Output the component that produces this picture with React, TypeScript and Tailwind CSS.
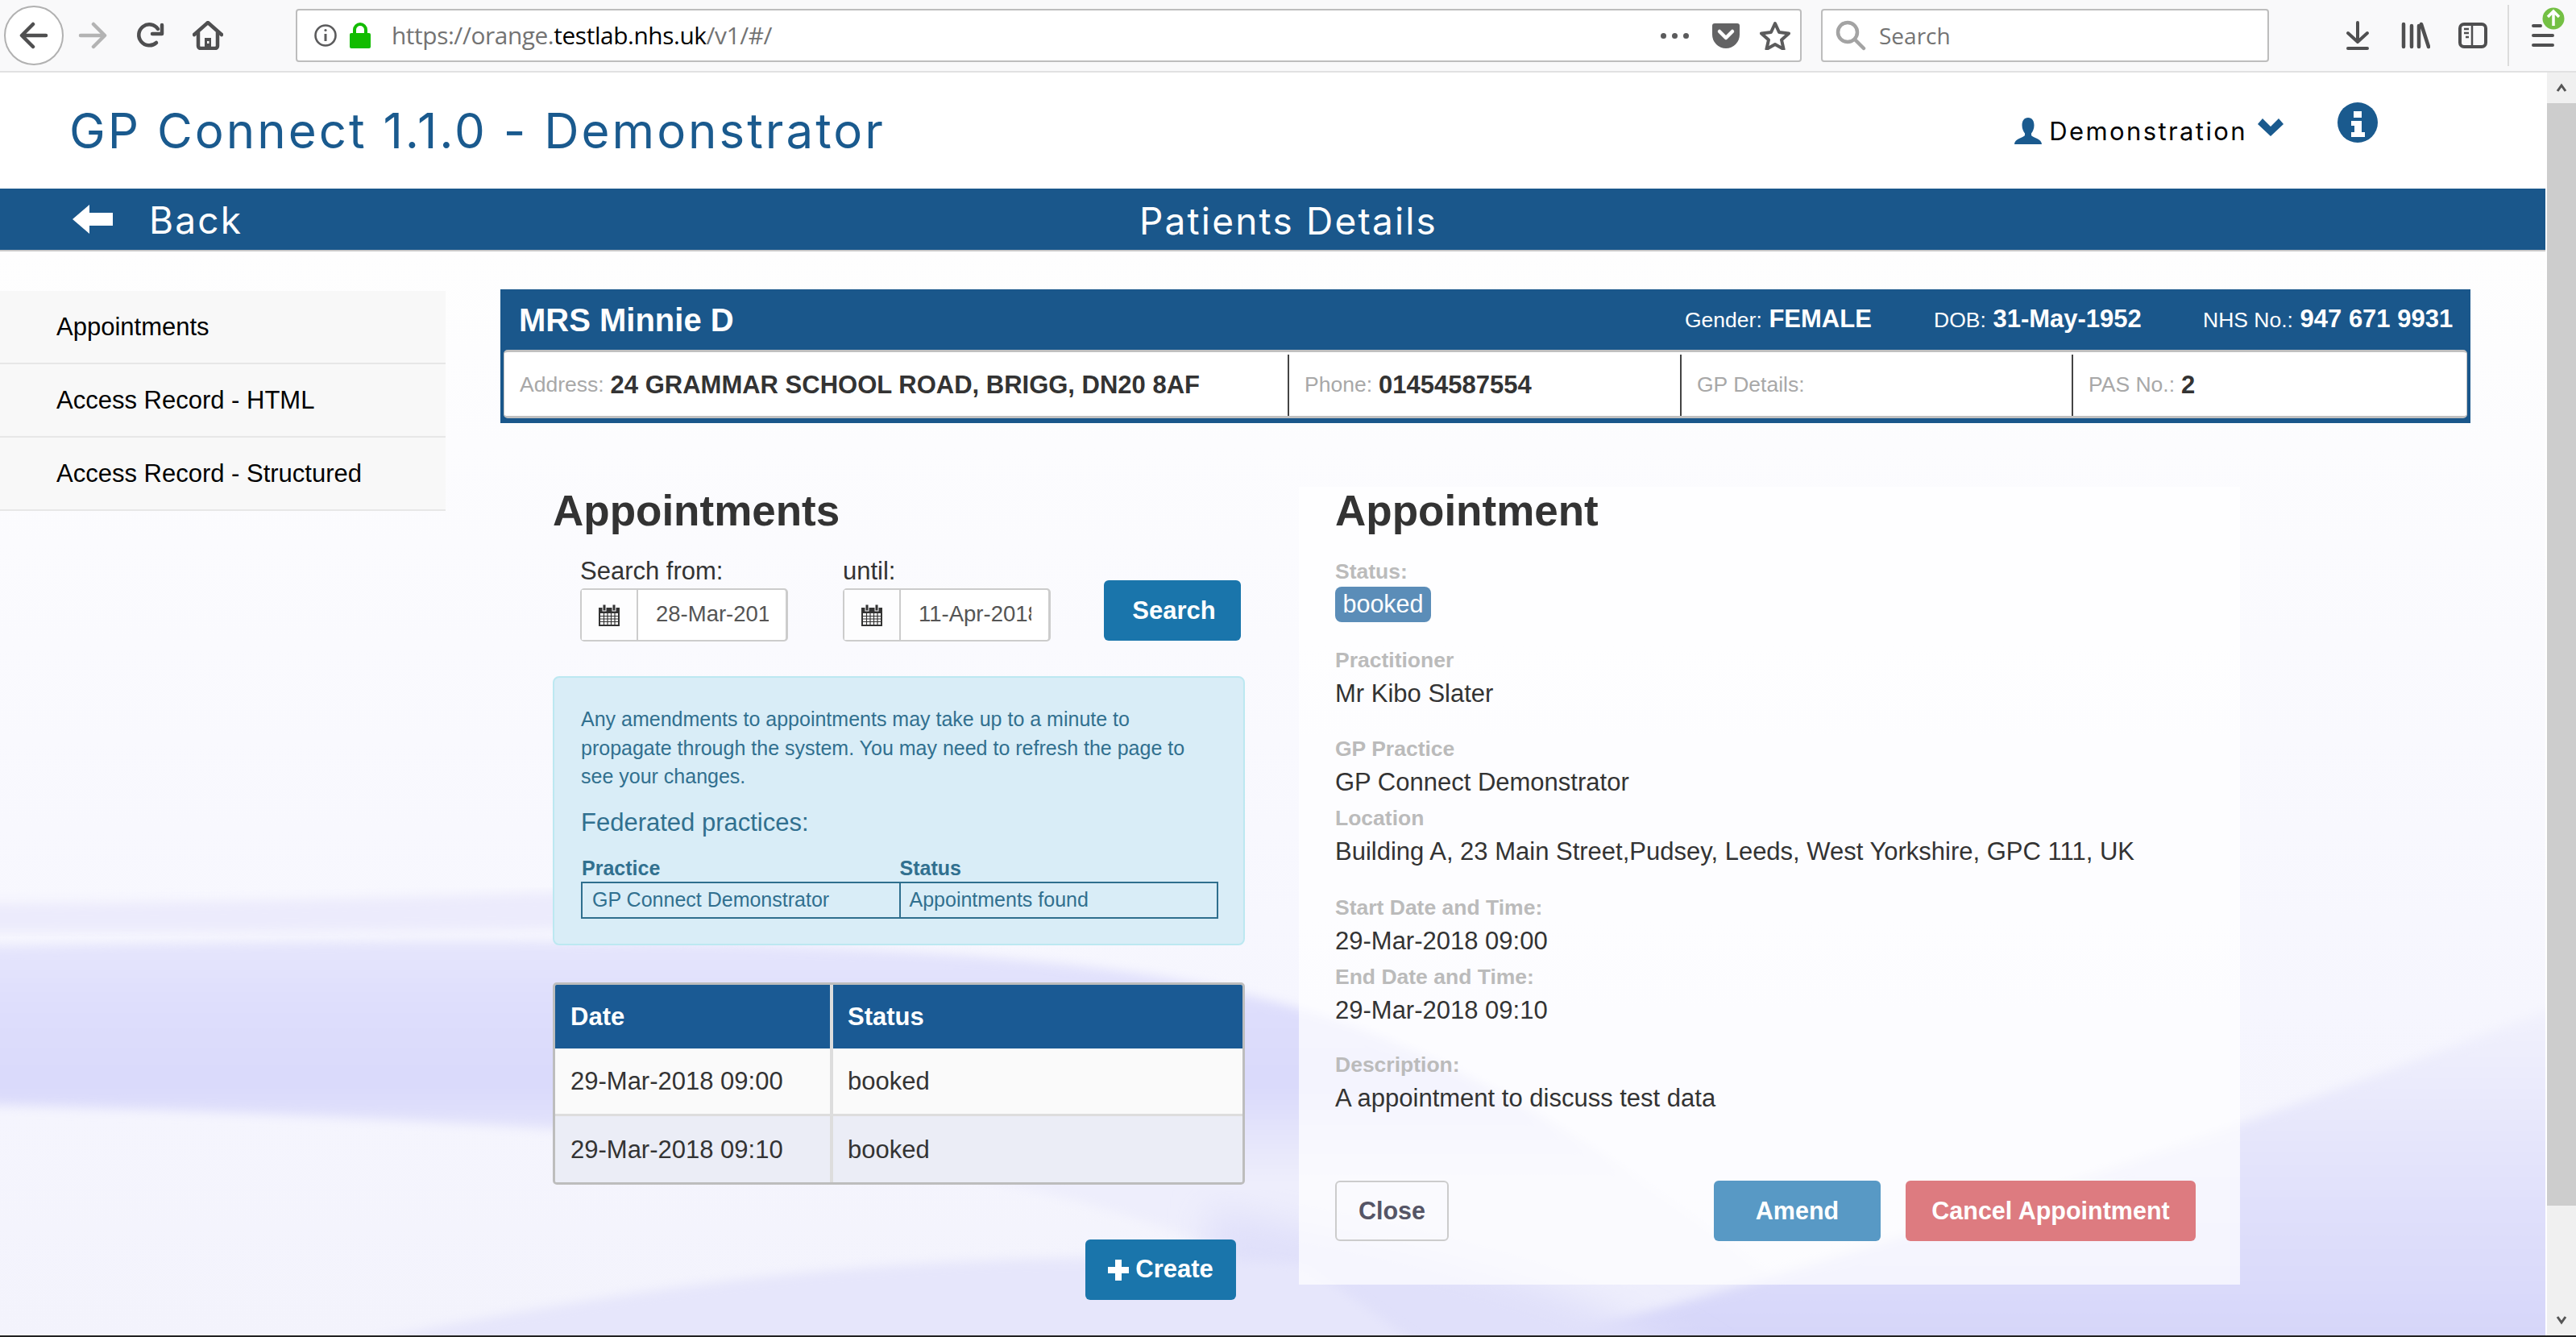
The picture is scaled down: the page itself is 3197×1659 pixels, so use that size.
import React from "react";

const sans = "font-['Liberation_Sans',Arial,sans-serif]";

// Firefox toolbar glyphs
const BackIcon = () => (
  <svg width="36" height="34" viewBox="0 0 36 34" fill="none" stroke="#4f4f50" strokeWidth="4.5" strokeLinecap="round" strokeLinejoin="round">
    <path d="M33 17H4M17 3 3 17l14 14" />
  </svg>
);
const ForwardIcon = () => (
  <svg width="36" height="34" viewBox="0 0 36 34" fill="none" stroke="#b3b3b3" strokeWidth="4.5" strokeLinecap="round" strokeLinejoin="round">
    <path d="M3 17h29M19 3l14 14-14 14" />
  </svg>
);
const ReloadIcon = () => (
  <svg width="36" height="34" viewBox="0 0 36 34" fill="none" stroke="#4f4f50" strokeWidth="4.5" strokeLinecap="round" strokeLinejoin="round">
    <path d="M26 26a13 13 0 1 1 2-17" />
    <path d="M33 4v11H21" fill="none" />
  </svg>
);
const HomeIcon = () => (
  <svg width="38" height="36" viewBox="0 0 38 36" fill="none" stroke="#4f4f50" strokeWidth="4.5" strokeLinecap="round" strokeLinejoin="round">
    <path d="M2 17 19 2l17 15" />
    <path d="M7 14v17a3 3 0 0 0 3 3h18a3 3 0 0 0 3-3V14" />
    <path d="M15 34V21h8v13" fill="#4f4f50" stroke="none" />
    <rect x="18" y="25" width="2.5" height="3" fill="#f9f9fa" stroke="none" />
  </svg>
);
const InfoRing = () => (
  <svg width="30" height="30" viewBox="0 0 30 30" fill="none" stroke="#5b5b5c" strokeWidth="2.6">
    <circle cx="15" cy="15" r="12.5" />
    <path d="M15 13v9" strokeWidth="3" />
    <circle cx="15" cy="8.5" r="1.6" fill="#5b5b5c" stroke="none" />
  </svg>
);
const LockIcon = () => (
  <svg width="28" height="32" viewBox="0 0 28 32">
    <path d="M7 14V9a7 7 0 0 1 14 0v5" fill="none" stroke="#12bc00" strokeWidth="4" />
    <rect x="1" y="13" width="26" height="19" rx="2" fill="#12bc00" />
  </svg>
);
const PocketIcon = () => (
  <svg width="36" height="32" viewBox="0 0 36 32">
    <path d="M4 1h28a3 3 0 0 1 3 3v11a17 17 0 0 1-34 0V4a3 3 0 0 1 3-3z" fill="#636364" />
    <path d="M10 11l8 8 8-8" fill="none" stroke="#fff" strokeWidth="4.5" strokeLinecap="round" strokeLinejoin="round" />
  </svg>
);
const StarIcon = () => (
  <svg width="38" height="36" viewBox="0 0 38 36" fill="none" stroke="#5b5b5c" strokeWidth="4" strokeLinejoin="round">
    <path d="M19 3l5 11 12 1.400-9 8 2.600 11.600L19 29l-10.600 6L11 23.400l-9-8L14 14z" />
  </svg>
);
const MagnifierIcon = () => (
  <svg width="38" height="38" viewBox="0 0 38 38" fill="none" stroke="#a3a3a3" strokeWidth="4.5" strokeLinecap="round">
    <circle cx="15" cy="15" r="12" />
    <path d="M24 24l11 11" />
  </svg>
);
const DownloadIcon = () => (
  <svg width="30" height="36" viewBox="0 0 30 36" fill="none" stroke="#4f4f50" strokeWidth="4" strokeLinecap="round" strokeLinejoin="round">
    <path d="M15 2v23M3 15l12 11 12-11M3 34h24" />
  </svg>
);
const LibraryIcon = () => (
  <svg width="36" height="34" viewBox="0 0 36 34" fill="none" stroke="#4f4f50" strokeWidth="4.5" strokeLinecap="round">
    <path d="M3 3v28M13 5v26M22 5v26M25 3l9 28" />
  </svg>
);
const SidebarIcon = () => (
  <svg width="36" height="32" viewBox="0 0 36 32" fill="none" stroke="#4f4f50" strokeWidth="4">
    <rect x="2" y="2" width="32" height="28" rx="5" />
    <path d="M17 2v28" strokeWidth="2.500" />
    <path d="M7 8h6M7 13h6M9 18h4" strokeWidth="2.500" />
  </svg>
);
const MenuIcon = () => (
  <div className="relative w-[28px] h-[30px]">
    <svg width="28" height="30" viewBox="0 0 28 30" fill="none" stroke="#4f4f50" strokeWidth="4" strokeLinecap="round">
      <path d="M2 3h9M2 15h24M2 27h24" />
    </svg>
    <svg className="absolute -top-[20px] left-[13px]" width="28" height="28" viewBox="0 0 28 28">
      <circle cx="14" cy="14" r="13.500" fill="#74c044" />
      <path d="M14 23V6M7 12l7-7 7 7" fill="none" stroke="#fff" strokeWidth="3.500" />
    </svg>
  </div>
);

// Glyphicon style page icons
const GlyphUser = () => (
  <svg width="34" height="33" viewBox="0 0 34 33" fill="#1a5a8e">
    <path d="M17 0c5 0 7.500 4 7.500 9.500 0 4-1.500 7.500-3.500 10v2.500c2 3 13 4 13 11H0c0-7 11-8 13-11v-2.500c-2-2.500-3.500-6-3.500-10C9.500 4 12 0 17 0z" />
  </svg>
);
const GlyphChevron = () => (
  <svg width="32" height="22" viewBox="0 0 32 22" fill="#1a5a8e">
    <path d="M0 7l6-7 10 10L26 0l6 7-16 15z" />
  </svg>
);
const GlyphInfo = () => (
  <svg width="50" height="50" viewBox="0 0 50 50">
    <circle cx="25" cy="25" r="25" fill="#1a5a8e" />
    <rect x="20" y="11" width="10" height="8" fill="#fff" />
    <path d="M17 23h13v14h4v6H17v-6h4v-8h-4z" fill="#fff" />
  </svg>
);
const GlyphArrowLeft = () => (
  <svg width="50" height="36" viewBox="0 0 50 36" fill="#fff">
    <path d="M0 18 21 0v10h29v16H21v10z" />
  </svg>
);
const GlyphCalendar = () => (
  <svg width="26" height="27" viewBox="0 0 26 27">
    <rect x="0" y="4" width="26" height="23" fill="#333" />
    <rect x="5" y="0" width="4" height="8" fill="#333" stroke="#fbfbfe" strokeWidth="1" />
    <rect x="17" y="0" width="4" height="8" fill="#333" stroke="#fbfbfe" strokeWidth="1" />
    <path d="M2 11h22v14H2z" fill="#fff" />
    <path d="M2 14.500h22M2 18h22M2 21.500h22M6.500 11v14M11 11v14M15.500 11v14M20 11v14" stroke="#333" strokeWidth="1.200" />
  </svg>
);
const GlyphPlus = () => (
  <svg width="26" height="26" viewBox="0 0 26 26" fill="#fff">
    <path d="M9 0h8v9h9v8h-9v9H9v-9H0V9h9z" />
  </svg>
);

// Wavy lavender backdrop of the page
const Backdrop = () => (
  <svg className="absolute inset-0 w-full h-full" viewBox="0 312 3159 1347" preserveAspectRatio="none">
    <defs>
      <linearGradient id="base" x1="0" y1="312" x2="0" y2="1659" gradientUnits="userSpaceOnUse">
        <stop offset="0" stopColor="#fefefe" />
        <stop offset="0.45" stopColor="#f9f9fe" />
        <stop offset="0.7" stopColor="#f6f6fe" />
        <stop offset="1" stopColor="#f3f3fc" />
      </linearGradient>
      <linearGradient id="band" x1="0" y1="1160" x2="0" y2="1470" gradientUnits="userSpaceOnUse">
        <stop offset="0" stopColor="#e6e6fc" />
        <stop offset="0.3" stopColor="#dedefc" />
        <stop offset="0.6" stopColor="#d9d9fb" />
        <stop offset="0.8" stopColor="#e4e4fb" />
        <stop offset="1" stopColor="#eeeefc" />
      </linearGradient>
      <linearGradient id="corner" x1="0" y1="1250" x2="0" y2="1659" gradientUnits="userSpaceOnUse">
        <stop offset="0" stopColor="#f2f2fd" />
        <stop offset="0.45" stopColor="#e4e4fb" />
        <stop offset="1" stopColor="#d6d6f9" />
      </linearGradient>
      <filter id="soft"><feGaussianBlur stdDeviation="7" /></filter>
      <filter id="softer"><feGaussianBlur stdDeviation="22" /></filter>
    </defs>
    <rect x="0" y="312" width="3159" height="1347" fill="url(#base)" />
    <path d="M-40 1122C200 1122 500 1116 700 1108L900 1150C600 1158 200 1158-40 1158z" fill="#ecebfc" filter="url(#soft)" />
    <path d="M-40 1175C400 1168 800 1165 1050 1178S1450 1205 1620 1255 2050 1440 2350 1720H1800C1600 1540 1250 1440 800 1410S200 1380-40 1372z" fill="url(#band)" filter="url(#soft)" />
    <path d="M1700 1720C2100 1620 2500 1510 3200 1240V1720z" fill="url(#corner)" filter="url(#soft)" />
    <path d="M1500 1500C1800 1560 2000 1600 2150 1720H1500z" fill="#e0e0fa" filter="url(#softer)" />
    <path d="M300 1700C700 1610 1100 1540 1620 1570L1800 1700z" fill="#e6e6fb" filter="url(#soft)" />
  </svg>
);

const Toolbar = () => (
  <div className={`flex items-center h-[90px] bg-[#f9f9fa] border-b-2 border-[#e1e1e2] ${sans}`}>
    <div className="ml-[5px] flex items-center justify-center w-[74px] h-[74px] rounded-full bg-white border-2 border-[#b1b1b1]">
      <BackIcon />
    </div>
    <div className="ml-[18px] flex items-center gap-[35px] w-[200px]">
      <ForwardIcon />
      <ReloadIcon />
      <HomeIcon />
    </div>
    <div className="ml-[70px] flex items-center w-[1869px] h-[66px] bg-white border-2 border-[#bdbdbd] rounded-[4px] pl-[20px] pr-[12px]">
      <InfoRing />
      <div className="ml-[14px]"><LockIcon /></div>
      <div className="ml-[25px] font-['Open_Sans',sans-serif] text-[29.8px] text-[#737373] flex-1 tracking-[-0.4px]">
        https://orange.<span className="text-black">testlab.nhs.uk</span>/v1/#/
      </div>
      <div className="flex gap-[7px] mr-[28px]">
        <span className="w-[7px] h-[7px] rounded-full bg-[#5b5b5c]" />
        <span className="w-[7px] h-[7px] rounded-full bg-[#5b5b5c]" />
        <span className="w-[7px] h-[7px] rounded-full bg-[#5b5b5c]" />
      </div>
      <PocketIcon />
      <div className="ml-[24px]"><StarIcon /></div>
    </div>
    <div className="ml-[24px] flex items-center w-[556px] h-[66px] bg-white border-2 border-[#bdbdbd] rounded-[4px] pl-[16px]">
      <MagnifierIcon />
      <span className="ml-[16px] font-['Open_Sans',sans-serif] text-[28px] text-[#737373]">Search</span>
    </div>
    <div className="ml-[95px]"><DownloadIcon /></div>
    <div className="ml-[39px]"><LibraryIcon /></div>
    <div className="ml-[35px]"><SidebarIcon /></div>
    <div className="ml-[25px] w-[2px] h-[76px] bg-[#dcdcdc]" />
    <div className="ml-[28px]"><MenuIcon /></div>
  </div>
);

const Header = () => (
  <div className="flex items-center justify-between h-[144px] bg-white pl-[86px] pr-[208px] font-['Inter',sans-serif]">
    <h1 className="text-[60px] text-[#1a5a8e] font-normal tracking-[3px]">GP Connect 1.1.0 - Demonstrator</h1>
    <div className="flex items-center">
      <GlyphUser />
      <span className="ml-[9px] text-[31px] text-black mt-[2px] tracking-[2.4px]">Demonstration</span>
      <span className="ml-[13px] -mt-[8px]"><GlyphChevron /></span>
      <span className="ml-[67px] -mt-[20px]"><GlyphInfo /></span>
    </div>
  </div>
);

const BackBar = () => (
  <div className="relative flex items-center h-[78px] bg-[#1a578b] border-b-2 border-[#c8c8c8] pl-[90px] font-['Inter',sans-serif] text-white text-[46px] tracking-[2.2px]">
    <GlyphArrowLeft />
    <span className="ml-[45px] mt-[2px]">Back</span>
    <span className="absolute left-[1414px] top-[6px]">Patients Details</span>
  </div>
);

const Sidebar = () => (
  <nav className={`w-[553px] mt-[49px] shrink-0 text-[31px] text-black ${sans}`}>
    {["Appointments", "Access Record - HTML", "Access Record - Structured"].map((item) => (
      <div key={item} className="flex items-center h-[91px] pl-[70px] pt-[2px] bg-[#f8f8f8] border-b-2 border-[#e7e7e7]">
        {item}
      </div>
    ))}
  </nav>
);

const PatientBanner = () => (
  <div className="w-[2445px] bg-[#1a578b] text-[31px] pb-[6px]">
    <div className="flex items-center h-[75px] pl-[23px] text-white">
      <span className="font-bold text-[40px] flex-1">MRS Minnie D</span>
      <span className="w-[309px]"><span className="text-[26.5px]">Gender:</span> <b>FEMALE</b></span>
      <span className="w-[334px]"><span className="text-[26.5px]">DOB:</span> <b>31-May-1952</b></span>
      <span className="w-[332px]"><span className="text-[26.5px]">NHS No.:</span> <b>947 671 9931</b></span>
    </div>
    <div className="flex h-[85px] mx-[4px] pt-[3px] bg-white border-t-[3px] border-b-[3px] border-x-[1px] border-[#c0c0c0] rounded-[5px] text-[#333]">
      <div className="flex items-center gap-[8px] w-[974px] pl-[19px] border-r-2 border-[#444]">
        <span className="text-[26.5px] text-[#a8a8a8]">Address:</span><b>24 GRAMMAR SCHOOL ROAD, BRIGG, DN20 8AF</b>
      </div>
      <div className="flex items-center gap-[8px] w-[487px] pl-[19px] border-r-2 border-[#444]">
        <span className="text-[26.5px] text-[#a8a8a8]">Phone:</span><b>01454587554</b>
      </div>
      <div className="flex items-center gap-[8px] w-[486px] pl-[19px] border-r-2 border-[#444]">
        <span className="text-[26.5px] text-[#a8a8a8]">GP Details:</span>
      </div>
      <div className="flex items-center gap-[8px] flex-1 pl-[19px]">
        <span className="text-[26.5px] text-[#a8a8a8]">PAS No.:</span><b>2</b>
      </div>
    </div>
  </div>
);

const DateField = ({ label, value }: { label: string; value: string }) => (
  <div className="w-[258px]">
    <div className="h-[45px] text-[31px] text-[#333] leading-[47px]">{label}</div>
    <div className="flex h-[66px] bg-white border-2 border-[#ccc] rounded-[5px] border-r-[3px]">
      <div className="flex items-center justify-center w-[70px] border-r-2 border-[#ccc] bg-[#fdfdfe]">
        <GlyphCalendar />
      </div>
      <div className="w-[140px] ml-[22px] overflow-hidden whitespace-nowrap leading-[60px] text-[27.5px] text-[#555]">{value}</div>
    </div>
  </div>
);

const AppointmentsColumn = () => (
  <div className="w-[859px] shrink-0">
    <h2 className="h-[60px] leading-[60px] text-[53px] font-bold text-[#333]">Appointments</h2>
    <div className="flex items-start mt-[21px] pl-[34px]">
      <DateField label="Search from:" value="28-Mar-2018" />
      <div className="ml-[68px]"><DateField label="until:" value="11-Apr-2018" /></div>
      <button type="button" className="ml-[66px] mt-[35px] pl-[4px] pt-[2px] w-[170px] h-[75px] rounded-[6px] bg-[#1a75ab] text-white font-bold text-[31px]">Search</button>
    </div>
    <div className="mt-[43px] h-[334px] rounded-[8px] bg-[#d9edf7] border-2 border-[#bce8f1] pl-[33px] pt-[34px] text-[#31708f]">
      <p className="text-[25px] leading-[35.5px] w-[790px]">
        Any amendments to appointments may take up to a minute to propagate through the system. You may need to refresh the page to see your changes.
      </p>
      <div className="mt-[18px] h-[42px] leading-[42px] text-[31px]">Federated practices:</div>
      <table className="mt-[18px] w-[791px] table-fixed text-[25px]">
        <thead>
          <tr className="h-[34px] text-left">
            <th className="font-bold leading-[34px]">Practice</th>
            <th className="font-bold leading-[34px]">Status</th>
          </tr>
        </thead>
        <tbody>
          <tr className="h-[44px]">
            <td className="border-2 border-[#2f6f8e] pl-[12px]">GP Connect Demonstrator</td>
            <td className="border-2 border-[#2f6f8e] pl-[11px]">Appointments found</td>
          </tr>
        </tbody>
      </table>
    </div>
    <div className="mt-[46px] border-[3px] border-[#bdbdbd] rounded-[5px] overflow-hidden text-[31px] text-[#333]">
      <div className="flex h-[79px] bg-[#1a5a94] text-white font-bold">
        <div className="flex items-center w-[341px] pl-[19px] pt-[2px]">Date</div>
        <div className="w-[4px] bg-[#dddddd]" />
        <div className="flex items-center pl-[18px] pt-[2px]">Status</div>
      </div>
      <div className="flex h-[84px] bg-[#fafafa] border-b-[3px] border-[#dddddd]">
        <div className="flex items-center w-[341px] pl-[19px] pt-[2px]">29-Mar-2018 09:00</div>
        <div className="w-[4px] bg-[#dddddd]" />
        <div className="flex items-center pl-[18px] pt-[2px]">booked</div>
      </div>
      <div className="flex h-[82px] bg-[#ebedf6]">
        <div className="flex items-center w-[341px] pl-[19px] pt-[3px]">29-Mar-2018 09:10</div>
        <div className="w-[4px] bg-[#dddddd]" />
        <div className="flex items-center pl-[18px] pt-[3px]">booked</div>
      </div>
    </div>
    <div className="flex justify-end mt-[68px] mr-[11px]">
      <button type="button" className="flex items-center justify-center gap-[8px] w-[187px] h-[75px] rounded-[6px] bg-[#1a75ab] text-white font-bold text-[31px]">
        <GlyphPlus />Create
      </button>
    </div>
  </div>
);

const fields = [
  { label: "Practitioner", value: "Mr Kibo Slater", gap: "mb-[26px]" },
  { label: "GP Practice", value: "GP Connect Demonstrator", gap: "mb-[2px]" },
  { label: "Location", value: "Building A, 23 Main Street,Pudsey, Leeds, West Yorkshire, GPC 111, UK", gap: "mb-[27px]" },
  { label: "Start Date and Time:", value: "29-Mar-2018 09:00", gap: "mb-[2px]" },
  { label: "End Date and Time:", value: "29-Mar-2018 09:10", gap: "mb-[25px]" },
  { label: "Description:", value: "A appointment to discuss test data", gap: "" },
];

const FieldLabel = ({ children }: { children: React.ReactNode }) => (
  <div className="h-[42px] leading-[42px] text-[26.5px] font-bold text-[#bbbbbb]">{children}</div>
);

const AppointmentPanel = () => (
  <div className="ml-[67px] w-[1168px] h-[990px] bg-white/70 pl-[45px] text-[#333]">
    <h2 className="h-[60px] leading-[60px] text-[53px] font-bold">Appointment</h2>
    <div className="mt-[24px]">
      <FieldLabel>Status:</FieldLabel>
      <span className="block -mt-[2px] mb-[26px] w-[119px] h-[44px] leading-[42px] rounded-[8px] bg-[#5b8db8] text-center text-white text-[30.5px]">booked</span>
    </div>
    {fields.map((f) => (
      <div key={f.label} className={f.gap}>
        <FieldLabel>{f.label}</FieldLabel>
        <div className="h-[42px] leading-[42px] text-[31px]">{f.value}</div>
      </div>
    ))}
    <div className="flex mt-[81px] h-[75px] w-[1068px] font-bold text-[30.5px]">
      <button type="button" className="w-[141px] rounded-[6px] border-2 border-[#cccccc] text-[#555566]">Close</button>
      <button type="button" className="ml-[329px] w-[207px] rounded-[6px] bg-[#5899c5] text-white">Amend</button>
      <button type="button" className="ml-[31px] w-[360px] rounded-[6px] bg-[#dd7b80] text-white">Cancel Appointment</button>
    </div>
  </div>
);

const Scrollbar = () => (
  <div className="flex flex-col w-[38px] h-full bg-[#f0f0f0] border-l-2 border-white">
    <div className="flex items-center justify-center h-[38px]">
      <svg width="14" height="12" viewBox="0 0 14 12" fill="none" stroke="#555" strokeWidth="3"><path d="M2 10l5-7 5 7" /></svg>
    </div>
    <div className="h-[1368px] w-[36px] bg-[#cdcdcd]" />
    <div className="flex-1" />
    <div className="flex items-center justify-center h-[38px]">
      <svg width="14" height="12" viewBox="0 0 14 12" fill="none" stroke="#555" strokeWidth="3"><path d="M2 2l5 7 5-7" /></svg>
    </div>
  </div>
);

export default function App() {
  return (
    <div className="flex flex-col w-[3197px] h-[1659px] overflow-hidden bg-white border-b-2 border-[#222]">
      <Toolbar />
      <div className="flex flex-1 min-h-0">
        <div className="flex flex-col w-[3159px]">
          <Header />
          <BackBar />
          <div className={`relative flex flex-1 min-h-0 ${sans}`}>
            <Backdrop />
            <div className="relative flex w-full">
              <Sidebar />
              <div className="ml-[68px] pt-[47px]">
                <PatientBanner />
                <div className="flex items-start mt-[79px] ml-[65px]">
                  <AppointmentsColumn />
                  <AppointmentPanel />
                </div>
              </div>
            </div>
          </div>
        </div>
        <Scrollbar />
      </div>
    </div>
  );
}
